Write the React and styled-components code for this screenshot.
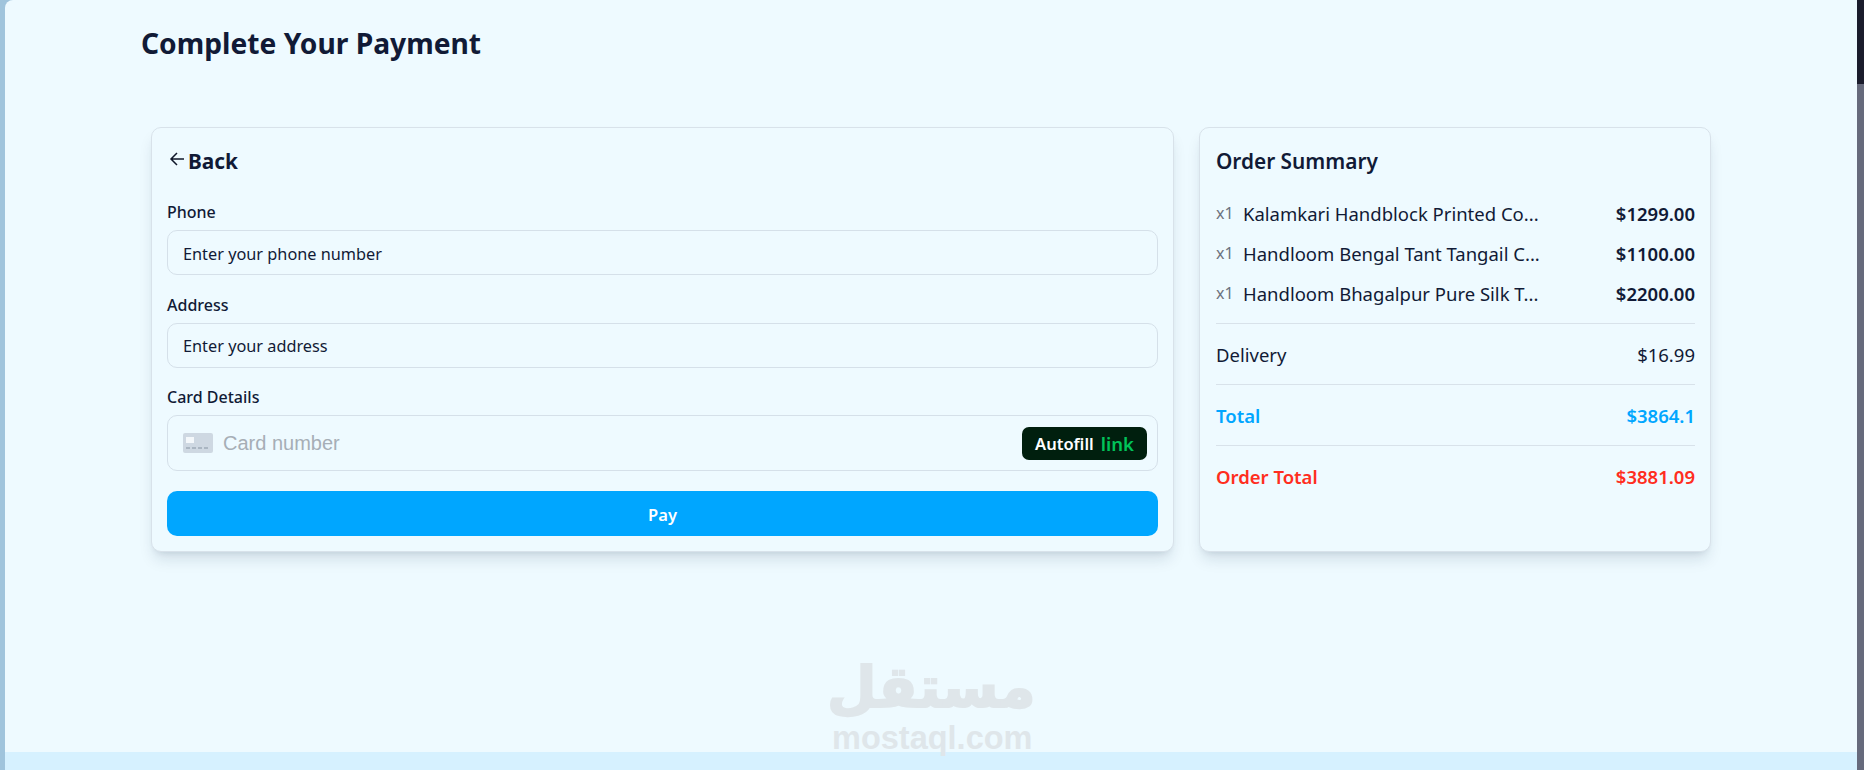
import React from 'react'
import styled, { createGlobalStyle } from 'styled-components'

const FONT = `"Noto Sans", "Open Sans", Arial, sans-serif`

const items = [
    { name: 'Kalamkari Handblock Printed Co...', price: '$1299.00' },
    { name: 'Handloom Bengal Tant Tangail C...', price: '$1100.00' },
    { name: 'Handloom Bhagalpur Pure Silk T...', price: '$2200.00' },
]

function ArrowLeft() {
    return (
        <svg width="18" height="18" viewBox="0 0 18 18" fill="none" stroke="#0f172a" strokeWidth="1.5">
            <path d="M16 9H3M9 3L3 9l6 6" />
        </svg>
    )
}

function CardIcon() {
    return (
        <svg width="30" height="20" viewBox="0 0 30 20">
            <rect width="30" height="20" rx="2" fill="#ced8e2" />
            <rect x="3" y="4" width="8" height="6" fill="#f4f8fb" />
            <path d="M3 15h4M9 15h4M15 15h4M21 15h4" stroke="#aab6c2" strokeWidth="2" />
        </svg>
    )
}

export default function App() {
    return (
        <>
            <GlobalStyle />
            <Screen>
                <Strip />
                <Page>
                    <Content>
                        <Title>Complete Your Payment</Title>
                        <Columns>
                            <FormCard>
                                <BackLink>
                                    <ArrowIcon>
                                        <ArrowLeft />
                                    </ArrowIcon>
                                    <span>Back</span>
                                </BackLink>
                                <Field>
                                    <Label>Phone</Label>
                                    <Input placeholder="Enter your phone number" />
                                </Field>
                                <Field>
                                    <Label>Address</Label>
                                    <Input placeholder="Enter your address" />
                                </Field>
                                <Field>
                                    <Label>Card Details</Label>
                                    <CardBox>
                                        <CardIcon />
                                        <CardPlaceholder>Card number</CardPlaceholder>
                                        <Autofill>
                                            Autofill <em>link</em>
                                        </Autofill>
                                    </CardBox>
                                </Field>
                                <PayButton>Pay</PayButton>
                            </FormCard>

                            <SummaryCard>
                                <SummaryTitle>Order Summary</SummaryTitle>
                                <ItemList>
                                    {items.map(item => (
                                        <Item key={item.name}>
                                            <Qty>x1</Qty>
                                            <ItemName>{item.name}</ItemName>
                                            <ItemPrice>{item.price}</ItemPrice>
                                        </Item>
                                    ))}
                                </ItemList>
                                <TotalRow>
                                    <span>Delivery</span>
                                    <span>$16.99</span>
                                </TotalRow>
                                <TotalRow color="#00a6ff" bold>
                                    <span>Total</span>
                                    <span>$3864.1</span>
                                </TotalRow>
                                <TotalRow color="#ff2d20" bold>
                                    <span>Order Total</span>
                                    <span>$3881.09</span>
                                </TotalRow>
                            </SummaryCard>
                        </Columns>
                    </Content>
                    <Footer />
                    <Watermark>
                        <WatermarkArabic>مستقل</WatermarkArabic>
                        <WatermarkLatin>mostaql.com</WatermarkLatin>
                    </Watermark>
                </Page>
                <Scrollbar>
                    <ScrollThumb />
                </Scrollbar>
            </Screen>
        </>
    )
}

const GlobalStyle = createGlobalStyle`
    * { box-sizing: border-box; }
    html, body { margin: 0; height: 100%; overflow: hidden; }
    body { font-family: ${FONT}; color: #0f172a; background: #eefaff; }
`

const Screen = styled.div`
    display: flex;
    width: 1864px;
    height: 770px;
    background: #a0c4dc;
`

const Strip = styled.div`
    width: 5px;
`

const Page = styled.div`
    position: relative;
    flex: 1;
    display: flex;
    flex-direction: column;
    background: #eefaff;
    border-top-left-radius: 8px;
    overflow: hidden;
`

const Content = styled.main`
    flex: 1;
    padding: 0 0 0 136px;
`

const Title = styled.h1`
    margin: 0;
    padding-top: 23px;
    height: 127px;
    font-size: 28.2px;
    line-height: 40px;
    font-weight: 700;
    color: #111a36;
`

const Columns = styled.div`
    display: flex;
    gap: 25px;
    margin-left: 10px;
`

const Panel = styled.section`
    height: 425px;
    background: #eefaff;
    border: 1px solid #d8e2ea;
    border-radius: 10px;
    box-shadow: 0 10px 15px -3px rgba(15, 40, 70, 0.13), 0 4px 6px -4px rgba(15, 40, 70, 0.12);
`

const FormCard = styled(Panel)`
    width: 1023px;
    padding: 0 15px;
`

const SummaryCard = styled(Panel)`
    width: 512px;
    padding: 0 15px 0 16px;
`

const BackLink = styled.div`
    display: flex;
    align-items: center;
    height: 65px;
    font-size: 20.8px;
    font-weight: 700;
    color: #111a36;
`

const ArrowIcon = styled.span`
    display: flex;
    margin: 0 2px 3px 1px;
`

const Field = styled.div`
    display: flex;
    flex-direction: column;
    margin-bottom: 10.5px;
`

const Label = styled.label`
    font-size: 16px;
    line-height: 39px;
    height: 37px;
    font-weight: 500;
    color: #111a36;
`

const Input = styled.input`
    height: 45px;
    padding: 2px 15px 0;
    background: #eefaff;
    border: 1px solid #d5e0e9;
    border-radius: 10px;
    font: 400 16.3px ${FONT};

    &::placeholder {
        color: #111a36;
        opacity: 1;
    }
`

const CardBox = styled.div`
    display: flex;
    align-items: center;
    height: 56px;
    padding: 0 10px 0 15px;
    border: 1px solid #d5e0e9;
    border-radius: 10px;
`

const CardPlaceholder = styled.span`
    flex: 1;
    margin-left: 10px;
    font-family: "Liberation Sans", Arial, sans-serif;
    font-size: 20px;
    color: #a6aeb6;
`

const Autofill = styled.div`
    display: flex;
    align-items: center;
    justify-content: center;
    gap: 7px;
    width: 125px;
    height: 33px;
    background: #001f0e;
    border-radius: 7px;
    color: #fff;
    font-size: 16.5px;
    font-weight: 600;

    em {
        font-style: normal;
        font-size: 18.5px;
        font-weight: 600;
        color: #00c35a;
    }
`

const PayButton = styled.button`
    display: block;
    width: 100%;
    height: 45px;
    margin-top: 20px;
    padding-top: 3px;
    border: 0;
    border-radius: 10px;
    background: #00a6ff;
    color: #fff;
    font: 600 16.5px ${FONT};
`

const SummaryTitle = styled.h2`
    margin: 0;
    height: 66px;
    font-size: 20.8px;
    line-height: 67px;
    font-weight: 600;
    color: #111a36;
`

const ItemList = styled.div`
    display: flex;
    flex-direction: column;
    gap: 10px;
    padding-top: 4px;
    padding-bottom: 15px;
`

const Item = styled.div`
    display: flex;
    align-items: center;
    height: 30px;
    font-size: 18.5px;
`

const Qty = styled.span`
    width: 27px;
    font-size: 16px;
    color: #6b7280;
`

const ItemName = styled.span`
    flex: 1;
    white-space: nowrap;
    color: #111a36;
`

const ItemPrice = styled.span`
    font-weight: 600;
    color: #111a36;
`

const TotalRow = styled.div`
    display: flex;
    justify-content: space-between;
    align-items: center;
    height: 61px;
    border-top: 1px solid #d8e2ea;
    font-size: 18.5px;
    font-weight: ${props => (props.bold ? 600 : 400)};
    color: ${props => props.color || '#111a36'};
`

const Footer = styled.footer`
    height: 18px;
    background: #d6f1ff;
`

const Watermark = styled.div`
    position: absolute;
    left: 822px;
    top: 650px;
    width: 200px;
    text-align: center;
    color: #dfe6ea;
    pointer-events: none;
`

const WatermarkArabic = styled.div`
    font-family: "DejaVu Sans", sans-serif;
    font-weight: 700;
    font-size: 57px;
    line-height: 70px;
    padding-top: 2px;
    height: 70px;
    -webkit-text-stroke: 2px #dfe6ea;
`

const WatermarkLatin = styled.div`
    padding-left: 5px;
    white-space: nowrap;
    font-family: "Liberation Sans", Arial, sans-serif;
    font-weight: 700;
    font-size: 32.5px;
    line-height: 36px;
`

const Scrollbar = styled.div`
    width: 7px;
    background: #1a1c2c;
`

const ScrollThumb = styled.div`
    height: 686px;
    margin-top: 84px;
    background: #666a7c;
`
